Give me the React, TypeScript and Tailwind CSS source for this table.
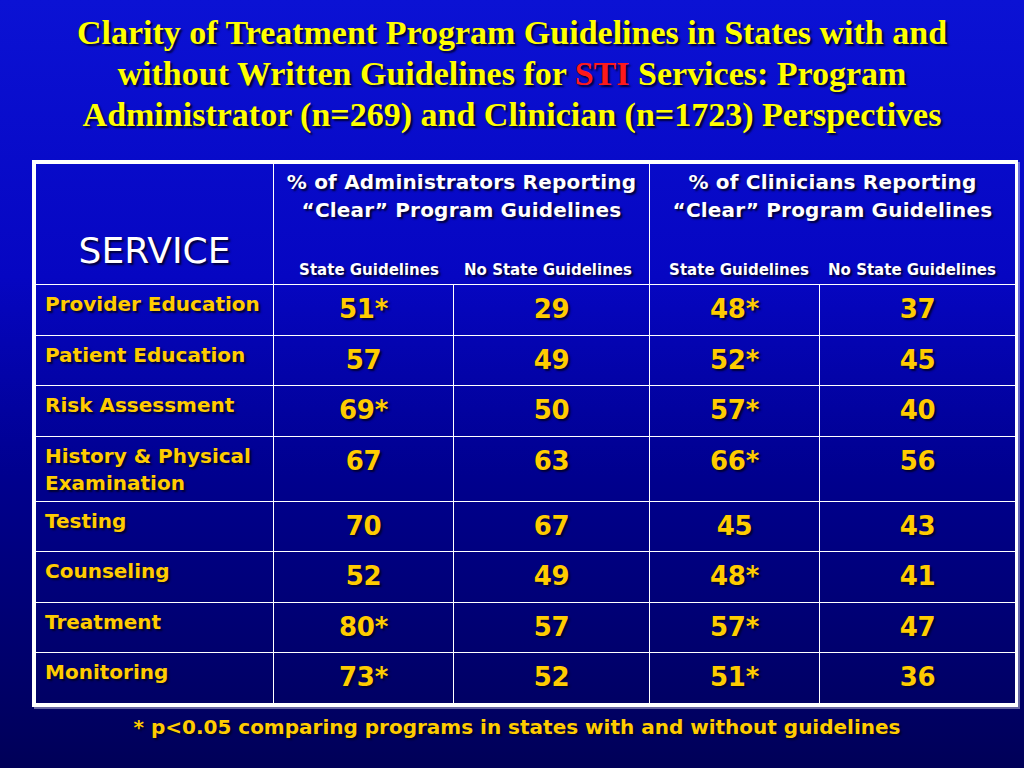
import React from 'react';

const rows = [
  { label: 'Provider Education', h: 'h-[51px]', v: ['51*', '29', '48*', '37'] },
  { label: 'Patient Education', h: 'h-[50px]', v: ['57', '49', '52*', '45'] },
  { label: 'Risk Assessment', h: 'h-[51px]', v: ['69*', '50', '57*', '40'] },
  { label: 'History & Physical Examination', h: 'h-[65px]', v: ['67', '63', '66*', '56'] },
  { label: 'Testing', h: 'h-[50px]', v: ['70', '67', '45', '43'] },
  { label: 'Counseling', h: 'h-[51px]', v: ['52', '49', '48*', '41'] },
  { label: 'Treatment', h: 'h-[50px]', v: ['80*', '57', '57*', '47'] },
  { label: 'Monitoring', h: 'h-[51px]', v: ['73*', '52', '51*', '36'] },
];

const shadow = '[text-shadow:2px_2px_2px_rgba(0,0,40,0.9)]';

function GroupHeader({ line1, line2, first }: { line1: string; line2: string; first: string }) {
  return (
    <th colSpan={2} className="border border-white p-0 align-top font-bold text-white">
      <div className={`pt-[4px] text-[20px] leading-[28px] tracking-[0.2px] ${shadow}`}>
        <div>{line1}</div>
        <div>{line2}</div>
      </div>
      <div className={`mt-[37px] flex whitespace-nowrap text-[15px] leading-[18px] ${shadow}`}>
        <div className={`${first} text-center`}>State Guidelines</div>
        <div className="w-[168px] text-center">No State Guidelines</div>
      </div>
    </th>
  );
}

export default function App() {
  return (
    <div className="h-[768px] w-[1024px] overflow-hidden bg-[linear-gradient(to_bottom,#0b12d4_0%,#0606c2_36%,#00008e_62%,#000058_100%)] font-['DejaVu_Sans',sans-serif]">
      <h1 className="pt-[12px] text-center font-['Liberation_Serif',serif] text-[34px] font-bold leading-[41px] text-[#ffff00] [text-shadow:2px_2px_2px_#000033]">
        Clarity of Treatment Program Guidelines in States with and
        <br />
        without Written Guidelines for <span className="text-[#ff1a1a]">STI</span> Services: Program
        <br />
        Administrator (n=269) and Clinician (n=1723) Perspectives
      </h1>

      <div className="ml-[32px] mt-[25px] w-[986px] border-[3px] border-white shadow-[2px_2px_0_rgba(255,255,255,0.4)]">
        <table className="w-full table-fixed border-collapse">
          <colgroup>
            <col className="w-[238px]" />
            <col className="w-[180px]" />
            <col className="w-[196px]" />
            <col className="w-[170px]" />
            <col className="w-[196px]" />
          </colgroup>
          <thead>
            <tr className="h-[121px]">
              <th className={`border border-white pt-[54px] text-center align-middle text-[36px] font-normal text-white ${shadow}`}>
                SERVICE
              </th>
              <GroupHeader line1="% of Administrators Reporting" line2="“Clear” Program Guidelines" first="w-[190px]" />
              <GroupHeader line1="% of Clinicians Reporting" line2="“Clear” Program Guidelines" first="w-[178px]" />
            </tr>
          </thead>
          <tbody>
            {rows.map((r) => (
              <tr key={r.label} className={r.h}>
                <td className={`border border-white px-[9px] pt-[6px] align-top text-[20px] font-bold leading-[27px] text-[#ffcc00] ${shadow}`}>
                  {r.label}
                </td>
                {r.v.map((n, i) => (
                  <td
                    key={i}
                    className={`border border-white pt-[9px] text-center align-top text-[26px] font-bold leading-[30px] tracking-[-0.3px] text-[#ffcc00] ${shadow}`}
                  >
                    {n}
                  </td>
                ))}
              </tr>
            ))}
          </tbody>
        </table>
      </div>

      <p className={`mt-[5px] pl-[10px] text-center text-[20px] font-bold text-[#ffcc00] ${shadow}`}>
        * p&lt;0.05 comparing programs in states with and without guidelines
      </p>
    </div>
  );
}
